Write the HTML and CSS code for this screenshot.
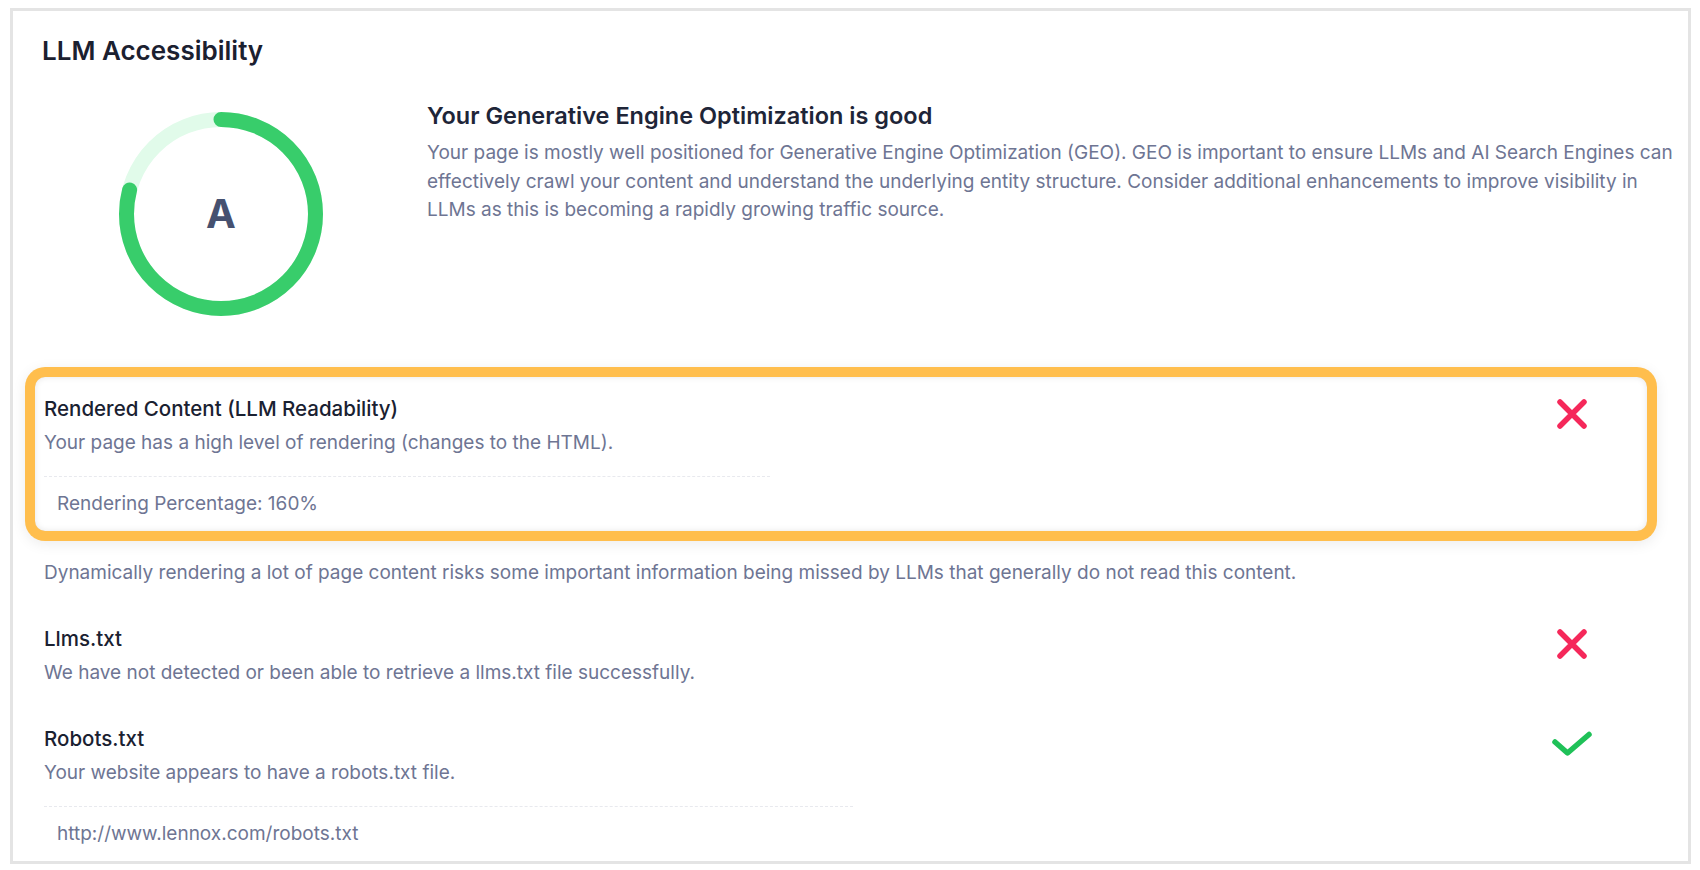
FILE: index.html
```html
<!DOCTYPE html>
<html lang="en">
<head>
  <meta charset="UTF-8">
  <meta name="viewport" content="width=device-width, initial-scale=1.0">
  <title>LLM Accessibility</title>
  <link rel="stylesheet" href="styles.css">
</head>
<body>
  <section class="card">
    <h2 class="card-title">LLM Accessibility</h2>

    <div class="summary">
      <div class="gauge">
        <svg width="204" height="204" viewBox="0 0 204 204">
          <circle class="gauge-track" cx="102" cy="102" r="94.5"></circle>
          <circle class="gauge-bar" cx="102" cy="102" r="94.5" stroke-dasharray="469 594" transform="rotate(-90 102 102)"></circle>
        </svg>
        <span class="gauge-grade">A</span>
      </div>
      <div class="summary-text">
        <h3>Your Generative Engine Optimization is good</h3>
        <p>Your page is mostly well positioned for Generative Engine Optimization (GEO). GEO is important to ensure LLMs and AI Search Engines can effectively crawl your content and understand the underlying entity structure. Consider additional enhancements to improve visibility in LLMs as this is becoming a rapidly growing traffic source.</p>
      </div>
    </div>

    <div class="checks">
      <div class="check check-flagged">
        <div class="check-body">
          <h4>Rendered Content (LLM Readability)</h4>
          <p>Your page has a high level of rendering (changes to the HTML).</p>
          <div class="check-detail detail-short">Rendering Percentage: 160%</div>
        </div>
        <div class="check-icon">
          <svg width="32" height="32" viewBox="0 0 32 32" class="icon-fail">
            <path d="M4 4 L28 28 M28 4 L4 28"></path>
          </svg>
        </div>
      </div>

      <p class="check-note">Dynamically rendering a lot of page content risks some important information being missed by LLMs that generally do not read this content.</p>

      <div class="check">
        <div class="check-body">
          <h4>Llms.txt</h4>
          <p>We have not detected or been able to retrieve a llms.txt file successfully.</p>
        </div>
        <div class="check-icon">
          <svg width="32" height="32" viewBox="0 0 32 32" class="icon-fail">
            <path d="M4 4 L28 28 M28 4 L4 28"></path>
          </svg>
        </div>
      </div>

      <div class="check">
        <div class="check-body">
          <h4>Robots.txt</h4>
          <p>Your website appears to have a robots.txt file.</p>
          <div class="check-detail detail-long">http://www.lennox.com/robots.txt</div>
        </div>
        <div class="check-icon">
          <svg width="46" height="32" viewBox="0 0 46 32" class="icon-pass">
            <path d="M6 14 L18.5 25 L40 6.5"></path>
          </svg>
        </div>
      </div>
    </div>
  </section>
</body>
</html>
```

FILE: styles.css
```css
body {
  margin: 0;
  background: #fff;
  font-family: Inter, "Noto Sans", sans-serif;
  color: #6e7593;
}

.card {
  margin: 8px 9px 0 10px;
  padding: 24px 8px 0 22px;
  border: 3px solid #e4e4e4;
}

.card-title {
  margin: 0 0 0 7px;
  font-size: 26px;
  line-height: 32px;
  font-weight: 600;
  color: #1b2030;
}

.summary {
  display: grid;
  grid-template-columns: 372px 1fr;
  column-gap: 20px;
  margin-top: 33px;
}

.gauge {
  position: relative;
  width: 204px;
  height: 204px;
  margin: 11.6px auto 0;
}

.gauge svg {
  display: block;
}

.gauge-track {
  fill: none;
  stroke: #e1fbea;
  stroke-width: 15;
}

.gauge-bar {
  fill: none;
  stroke: #38cd6b;
  stroke-width: 15;
  stroke-linecap: round;
}

.gauge-grade {
  position: absolute;
  inset: 0;
  display: flex;
  align-items: center;
  justify-content: center;
  font-size: 40px;
  font-weight: 700;
  color: #465170;
}

.summary-text h3 {
  margin: 0;
  font-size: 23.5px;
  line-height: 32px;
  font-weight: 600;
  color: #1e2538;
}

.summary-text p {
  margin: 7px 0 0;
  font-size: 19px;
  line-height: 28.5px;
}

.checks {
  margin: 61px 33px 0 0;
}

.check {
  display: flex;
  align-items: flex-start;
  padding: 18px 9px 13px;
}

.check + .check {
  margin-top: 7px;
}

.check-flagged {
  border-radius: 10px;
  box-shadow: 0 0 0 10px #ffbe4d, 0 3px 14px 10px rgba(0, 0, 0, 0.08), inset 0 0 6px rgba(0, 0, 0, 0.1);
}

.check-body {
  flex: 1;
}

.check-body h4 {
  margin: 0;
  font-size: 20.5px;
  line-height: 28px;
  font-weight: 500;
  color: #1a2131;
}

.check-body p {
  margin: 6px 0 0;
  font-size: 19px;
  line-height: 28px;
}

.check-detail {
  margin-top: 19px;
  padding: 13px 0 0 13px;
  border-top: 1px dashed #e8e9ee;
  font-size: 19px;
  line-height: 28px;
}

.detail-short {
  width: 713px;
}

.detail-long {
  width: 796px;
}

.check-icon {
  width: 48px;
  margin: 3px 42px 0 0;
  display: flex;
  justify-content: center;
}

.check-icon svg path {
  fill: none;
  stroke-width: 5.5;
  stroke-linecap: round;
  stroke-linejoin: round;
}

.icon-fail path {
  stroke: #f5285a;
}

.icon-pass path {
  stroke: #1fc158;
}

.check-note {
  margin: 28px 0 20px;
  padding-left: 9px;
  font-size: 19px;
  line-height: 28px;
}
```
